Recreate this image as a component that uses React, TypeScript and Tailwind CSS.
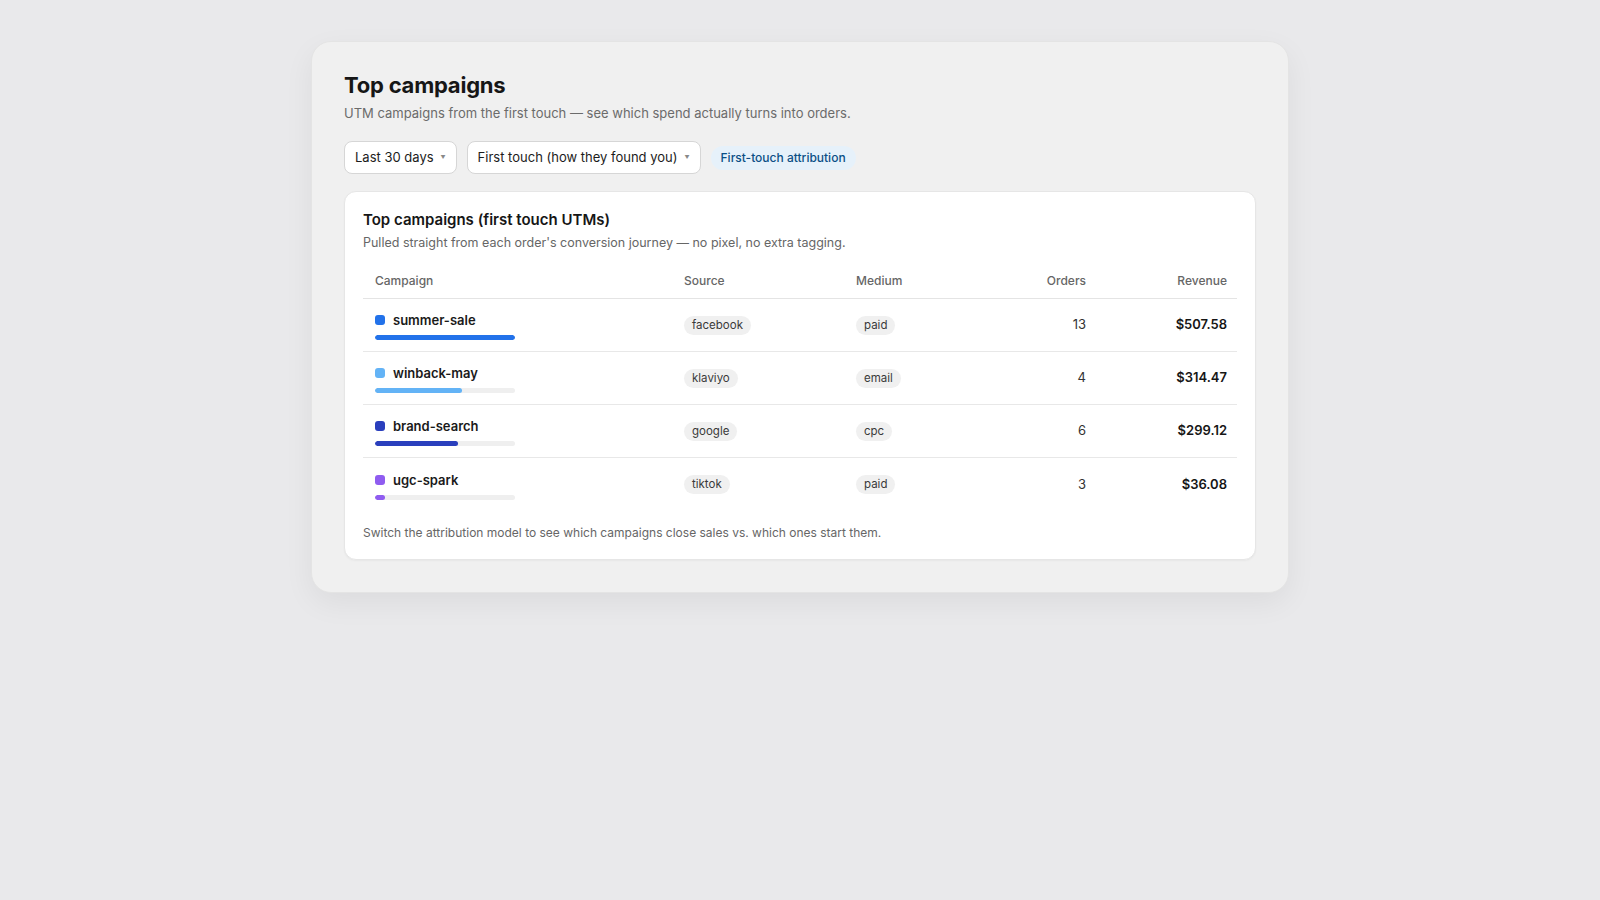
import React from 'react';

interface Campaign {
  name: string;
  color: string;
  source: string;
  medium: string;
  orders: number;
  revenue: number;
}

const campaigns: Campaign[] = [
  { name: 'summer-sale', color: '#2272ea', source: 'facebook', medium: 'paid', orders: 13, revenue: 507.58 },
  { name: 'winback-may', color: '#63b3f6', source: 'klaviyo', medium: 'email', orders: 4, revenue: 314.47 },
  { name: 'brand-search', color: '#2a3fbd', source: 'google', medium: 'cpc', orders: 6, revenue: 299.12 },
  { name: 'ugc-spark', color: '#8f5cf0', source: 'tiktok', medium: 'paid', orders: 3, revenue: 36.08 },
];

const maxRevenue = Math.max(...campaigns.map((c) => c.revenue));

const cols = 'grid grid-cols-[309px_172px_127px_127px_141px] items-center';

const Select = ({ label }: { label: string }) => (
  <button className="h-[33px] flex items-center gap-[7px] pl-[10px] pr-[10px] bg-white border border-[#d6d6d6] rounded-lg text-[13px] text-[#1c1c1c]">
    <span>{label}</span>
    <span className="text-[5px] text-[#888] leading-none">▼</span>
  </button>
);

const Pill = ({ text }: { text: string }) => (
  <span className="px-2 py-[2px] rounded-full bg-[#f0f0f0] text-[11.5px] leading-[15px] text-[#3a3a3a]">
    {text}
  </span>
);

const App: React.FC = () => {
  return (
    <div
      className="min-h-[900px] w-full bg-[#e9e9eb] pt-[41px]"
      style={{ fontFamily: 'Inter, "Noto Sans", sans-serif' }}
    >
      <div className="mx-auto w-[978px] bg-[#f0f0f0] border border-[#e4e4e4] rounded-[20px] shadow-[0_10px_30px_rgba(0,0,0,0.06)] px-8 pt-[29px] pb-8">
        <h1 className="text-[22px] leading-7 font-bold text-[#161616] tracking-[-0.01em]">Top campaigns</h1>
        <p className="mt-1 text-[13px] leading-5 text-[#6b6b6b]">
          UTM campaigns from the first touch — see which spend actually turns into orders.
        </p>

        <div className="mt-[18px] flex items-center gap-2.5">
          <Select label="Last 30 days" />
          <Select label="First touch (how they found you)" />
          <span className="px-[10px] py-[4px] rounded-full bg-[#e6f1fa] text-[12px] leading-4 font-medium text-[#0b4f86]">
            First-touch attribution
          </span>
        </div>

        <div className="mt-[17px] bg-white border border-[#e6e6e6] rounded-xl p-[18px] shadow-[0_1px_2px_rgba(0,0,0,0.04)]">
          <h2 className="text-[15px] leading-5 font-semibold text-[#161616]">Top campaigns (first touch UTMs)</h2>
          <p className="mt-1 text-[12.5px] leading-[18px] text-[#666]">
            Pulled straight from each order's conversion journey — no pixel, no extra tagging.
          </p>

          <div className="mt-3">
            <div className={`${cols} h-[35px] border-b border-[#e4e4e4] text-[12px] font-medium text-[#666]`}>
              <div className="px-3">Campaign</div>
              <div className="px-3">Source</div>
              <div className="px-3">Medium</div>
              <div className="px-3 text-right">Orders</div>
              <div className="px-3 text-right">Revenue</div>
            </div>
            {campaigns.map((c, i) => (
              <div
                key={c.name}
                className={`${cols} h-[53px] ${i < campaigns.length - 1 ? 'border-b border-[#e8e8e8]' : ''}`}
              >
                <div className="px-3 flex flex-col gap-[5px]">
                  <div className="flex items-center gap-2">
                    <span className="w-[10px] h-[10px] rounded-[3px]" style={{ backgroundColor: c.color }} />
                    <span className="text-[13px] leading-5 font-semibold text-[#1a1a1a]">{c.name}</span>
                  </div>
                  <div className="w-[140px] h-[5px] rounded-full bg-[#efefef] overflow-hidden">
                    <div
                      className="h-full rounded-full"
                      style={{ width: `${(c.revenue / maxRevenue) * 100}%`, backgroundColor: c.color }}
                    />
                  </div>
                </div>
                <div className="px-3 flex items-center"><Pill text={c.source} /></div>
                <div className="px-3 flex items-center"><Pill text={c.medium} /></div>
                <div className="px-3 text-right text-[13px] text-[#333]">{c.orders}</div>
                <div className="px-3 text-right text-[13px] font-semibold text-[#161616]">
                  ${c.revenue.toFixed(2)}
                </div>
              </div>
            ))}
          </div>

          <p className="mt-[14px] text-[12px] leading-4 text-[#666]">
            Switch the attribution model to see which campaigns close sales vs. which ones start them.
          </p>
        </div>
      </div>
    </div>
  );
};

export default App;
